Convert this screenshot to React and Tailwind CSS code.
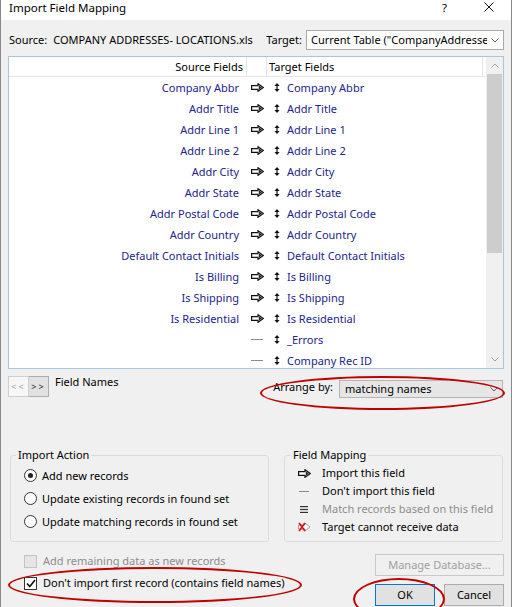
import React from 'react';

const rows = [
    ['Company Abbr', 'Company Abbr', true],
    ['Addr Title', 'Addr Title', true],
    ['Addr Line 1', 'Addr Line 1', true],
    ['Addr Line 2', 'Addr Line 2', true],
    ['Addr City', 'Addr City', true],
    ['Addr State', 'Addr State', true],
    ['Addr Postal Code', 'Addr Postal Code', true],
    ['Addr Country', 'Addr Country', true],
    ['Default Contact Initials', 'Default Contact Initials', true],
    ['Is Billing', 'Is Billing', true],
    ['Is Shipping', 'Is Shipping', true],
    ['Is Residential', 'Is Residential', true],
    ['', '_Errors', false],
    ['', 'Company Rec ID', false],
];

function ImportArrow() {
    return (
        <svg width="13" height="9" viewBox="0 0 13 9" className="block">
            <path d="M0.6 2.6H7V0.7L12.4 4.5L7 8.3V6.4H0.6Z" fill="#fff" stroke="#111" strokeWidth="1.2" />
            <path d="M7.8 2.2L10.9 4.5L7.8 6.8Z" fill="#222" />
        </svg>
    );
}

function UpDown() {
    return (
        <svg width="6" height="9" viewBox="0 0 6 9" className="block">
            <path d="M3 0L5.6 3H0.4Z M3 9L0.4 6H5.6Z" fill="#111" />
            <rect x="2.4" y="3" width="1.2" height="3" fill="#111" />
        </svg>
    );
}

function Chevron({ up = false, color = '#606060' }) {
    return (
        <svg width="8" height="5" viewBox="0 0 8 5" className="block">
            <polyline points={up ? '0.5,4.5 4,1 7.5,4.5' : '0.5,0.5 4,4 7.5,0.5'} fill="none" stroke={color} strokeWidth="1" />
        </svg>
    );
}

function Radio({ checked, label }) {
    return (
        <div className="h-[23px] flex items-center">
            <div className="w-[13px] h-[13px] rounded-full border border-[#333] bg-white flex items-center justify-center">
                {checked && <div className="w-[5px] h-[5px] rounded-full bg-[#222]" />}
            </div>
            <span className="ml-[5px]">{label}</span>
        </div>
    );
}

function MapRow({ icon, children, muted }) {
    return (
        <div className="h-[18px] flex items-center">
            <div className="w-[14px] flex justify-center">{icon}</div>
            <span className={`ml-[11px] whitespace-nowrap ${muted ? 'text-[#8d8d8d]' : ''}`}>{children}</span>
        </div>
    );
}

export default function App() {
    return (
        <div className="w-[512px] h-[607px] relative overflow-hidden bg-[#f0f0f0] border-x border-[#8a8a8a] text-[11px] leading-[16px] text-black font-['Noto_Sans',sans-serif]">

            {/* TITLE BAR */}
            <div className="h-[20px] bg-white flex items-start pl-[8px] pt-[1px]">
                <span className="text-[11.5px] leading-[13px]">Import Field Mapping</span>
                <span className="ml-auto text-[11.5px] leading-[13px]">?</span>
                <svg width="10" height="10" viewBox="0 0 10 10" className="ml-[37px] mr-[17px] mt-[1px]">
                    <path d="M0.5 0.5L9.5 9.5M9.5 0.5L0.5 9.5" stroke="#111" strokeWidth="1" />
                </svg>
            </div>

            {/* SOURCE / TARGET */}
            <div className="mt-[10px] h-[20px] flex items-center pl-[8px] pr-[7px]">
                <span>Source:</span>
                <span className="ml-[6px]">COMPANY ADDRESSES- LOCATIONS.xls</span>
                <span className="ml-auto mr-[4px]">Target:</span>
                <div className="w-[198px] h-[20px] bg-white border border-[#a9a9a9] flex items-center pl-[4px] pr-[4px]">
                    <span className="flex-1 whitespace-nowrap overflow-hidden">Current Table ("CompanyAddresse:</span>
                    <span className="ml-[4px]"><Chevron /></span>
                </div>
            </div>

            {/* FIELD LIST */}
            <div className="mt-[6px] ml-[7px] w-[496px] h-[313px] bg-white border border-[#a8c6de] flex overflow-hidden">
                <div className="flex-1 flex flex-col overflow-hidden">
                    <div className="h-[20px] shrink-0 flex border-b border-[#e5e5e5]">
                        <div className="w-[238px] text-right pr-[3px] border-r border-[#e5e5e5] leading-[19px]">Source Fields</div>
                        <div className="w-[20px] border-r border-[#e5e5e5]" />
                        <div className="flex-1 pl-[2px] leading-[19px] border-r border-[#e5e5e5] mr-[3px]">Target Fields</div>
                    </div>
                    {rows.map(([src, tgt, mapped], i) => (
                        <div key={i} className="h-[21px] shrink-0 flex items-center text-[#23238c]">
                            <div className="w-[238px] text-right pr-[8px] whitespace-nowrap">{src}</div>
                            <div className="w-[20px] pl-[4px]">
                                {mapped ? <ImportArrow /> : <div className="w-[12px] h-px bg-[#8a8a8a]" />}
                            </div>
                            <div className="flex-1 flex items-center">
                                <span className="ml-[7px]"><UpDown /></span>
                                <span className="ml-[7px] whitespace-nowrap">{tgt}</span>
                            </div>
                        </div>
                    ))}
                </div>
                {/* scrollbar */}
                <div className="w-[17px] bg-[#f0f0f0] flex flex-col">
                    <div className="h-[17px] flex items-center justify-center"><Chevron up color="#a3a3a3" /></div>
                    <div className="h-[179px] mx-px bg-[#cdcdcd]" />
                    <div className="flex-1" />
                    <div className="h-[17px] flex items-center justify-center"><Chevron color="#a3a3a3" /></div>
                </div>
            </div>

            {/* NAV + ARRANGE */}
            <div className="mt-[7px] flex items-start pl-[7px] pr-[8px]">
                <div className="flex">
                    <div className="w-[21px] h-[21px] bg-[#f7f7f7] border border-[#cfcfcf] text-[9px] text-[#a0a0a0] flex items-center justify-center tracking-[2px]">&lt;&lt;</div>
                    <div className="w-[20px] h-[21px] bg-[#e1e1e1] border border-[#adadad] border-l-0 text-[9px] text-[#222] flex items-center justify-center tracking-[2px]">&gt;&gt;</div>
                </div>
                <span className="ml-[6px] -mt-[2px]">Field Names</span>
                <div className="ml-auto mt-[4px] flex items-start">
                    <span className="-mt-[1px] mr-[6px]">Arrange by:</span>
                    <div className="w-[164px] h-[18px] bg-[#e6e6e6] border border-[#b4b4b4] flex items-center pl-[5px] pr-[4px]">
                        <span className="flex-1">matching names</span>
                        <Chevron />
                    </div>
                </div>
            </div>

            {/* GROUPS */}
            <div className="mt-[49px] flex pl-[9px] gap-[15px]">
                <fieldset className="w-[259px] h-[95px] border border-[#dcdcdc] rounded-[3px]">
                    <legend className="ml-[5px] px-[2px]">Import Action</legend>
                    <div className="pl-[13px] pt-[1px]">
                        <Radio checked label="Add new records" />
                        <Radio label="Update existing records in found set" />
                        <Radio label="Update matching records in found set" />
                    </div>
                </fieldset>
                <fieldset className="w-[219px] h-[95px] border border-[#dcdcdc] rounded-[3px]">
                    <legend className="ml-[6px] px-[2px]">Field Mapping</legend>
                    <div className="pl-[12px] pt-[1px]">
                        <MapRow icon={<ImportArrow />}>Import this field</MapRow>
                        <MapRow icon={<div className="w-[10px] h-px bg-[#8a8a8a]" />}>Don't import this field</MapRow>
                        <MapRow muted icon={
                            <svg width="8" height="7" viewBox="0 0 8 7" className="block">
                                <rect x="0" y="0" width="8" height="1.2" fill="#333" />
                                <rect x="0" y="2.9" width="8" height="1.2" fill="#333" />
                                <rect x="0" y="5.8" width="8" height="1.2" fill="#333" />
                            </svg>
                        }>Match records based on this field</MapRow>
                        <MapRow icon={
                            <svg width="14" height="10" viewBox="0 0 14 10" className="block">
                                <path d="M1.5 3H8V1L13 5L8 9V7H1.5Z" fill="#fff" stroke="#a0a0a0" strokeWidth="1" />
                                <path d="M2 1L8 9M8 1L2 9" stroke="#e01010" strokeWidth="1.7" />
                            </svg>
                        }>Target cannot receive data</MapRow>
                    </div>
                </fieldset>
            </div>

            {/* BOTTOM */}
            <div className="mt-[8px] flex items-start pl-[23px] pr-[7px]">
                <div className="flex flex-col">
                    <div className="h-[22px] flex items-center">
                        <div className="w-[13px] h-[13px] border border-[#c4c4c4] bg-[#e6e6e6]" />
                        <span className="ml-[6px] text-[#8d8d8d]">Add remaining data as new records</span>
                    </div>
                    <div className="h-[22px] flex items-center">
                        <div className="w-[13px] h-[13px] border border-[#333] bg-white flex items-center justify-center">
                            <svg width="10" height="9" viewBox="0 0 10 9" className="block">
                                <polyline points="1,4.5 3.8,7.5 9,1" fill="none" stroke="#111" strokeWidth="1.6" />
                            </svg>
                        </div>
                        <span className="ml-[6px]">Don't import first record (contains field names)</span>
                    </div>
                </div>
                <div className="ml-auto mt-[4px] flex flex-col items-end">
                    <div className="w-[129px] h-[22px] border border-[#c8c8c8] bg-[#f0f0f0] text-[#a0a0a0] flex items-center justify-center">Manage Database...</div>
                    <div className="mt-[8px] flex gap-[9px]">
                        <div className="w-[60px] h-[22px] border border-[#0078d7] bg-[#e1e1e1] flex items-center justify-center">OK</div>
                        <div className="w-[60px] h-[22px] border border-[#adadad] bg-[#e1e1e1] flex items-center justify-center">Cancel</div>
                    </div>
                </div>
            </div>

            {/* RED ANNOTATIONS */}
            <div className="absolute left-[259px] top-[376px] w-[245px] h-[34px] rounded-[50%] border-[2.5px] border-[#c00000] pointer-events-none" />
            <div className="absolute left-[7px] top-[567px] w-[294px] h-[36px] rounded-[50%] border-[2.5px] border-[#c00000] pointer-events-none" />
            <div className="absolute left-[352px] top-[578px] w-[92px] h-[42px] rounded-[50%] border-[2.5px] border-[#c00000] pointer-events-none" />
        </div>
    );
}
